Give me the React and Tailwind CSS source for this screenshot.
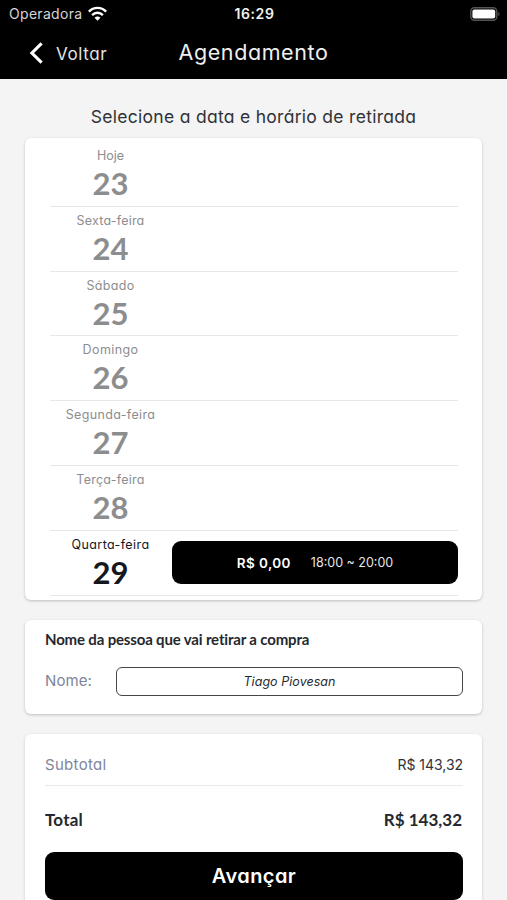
const days = [
  { name: "Hoje", number: 23, tracking: "tracking-[0px]" },
  { name: "Sexta-feira", number: 24, tracking: "tracking-[0.2px]" },
  { name: "Sábado", number: 25, tracking: "tracking-[0.35px]" },
  { name: "Domingo", number: 26, tracking: "tracking-[0.4px]" },
  { name: "Segunda-feira", number: 27, tracking: "tracking-[0.35px]" },
  { name: "Terça-feira", number: 28, tracking: "tracking-[0.25px]" },
  { name: "Quarta-feira", number: 29, tracking: "tracking-[0.4px]", slot: { price: "R$ 0,00", time: "18:00 ~ 20:00" } },
];

const StatusBar = () => (
  <div className="grid grid-cols-3 items-center h-7 pl-[9px] pr-[7px] font-['Inter',sans-serif] [font-feature-settings:normal]">
    <div className="flex items-center gap-[6px]">
      <span className="text-[14px] leading-5 tracking-[0.3px] text-[#d5d5d5]">Operadora</span>
      <svg width="19" height="15" viewBox="0 0 18 14" fill="none" stroke="white" strokeWidth="2.3" className="-mt-px">
        <path d="M0.8 5.2C5.4 0.5 12.6 0.5 17.2 5.2" />
        <path d="M3.9 8.5C6.8 5.6 11.2 5.6 14.1 8.5" />
        <path d="M9 13.8L6.2 11C7.8 9.5 10.2 9.5 11.8 11Z" fill="white" stroke="none" />
      </svg>
    </div>
    <span className="text-center text-[14px] leading-5 font-semibold tracking-[0.6px] text-[#f2f2f2]">16:29</span>
    <div className="flex justify-end">
      <svg width="30" height="14" viewBox="0 0 30 14">
        <rect x="0.8" y="0.8" width="26" height="12.4" rx="3.6" fill="none" stroke="#555" strokeWidth="1.4" />
        <rect x="2.4" y="2.4" width="22.8" height="9.2" rx="2" fill="white" />
        <path d="M28.3 4.8C30 5.5 30 8.5 28.3 9.2Z" fill="#555" />
      </svg>
    </div>
  </div>
);

const Header = () => (
  <header className="h-[79px] shrink-0 bg-black text-white">
    <StatusBar />
    <div className="grid grid-cols-[1fr_auto_1fr] items-center h-[50px]">
      <button className="flex items-center pl-[29px]">
        <svg width="15" height="22" viewBox="0 0 15 22" fill="none" stroke="white" strokeWidth="3.1">
          <path d="M12.6 1.4L2.9 11L12.6 20.6" />
        </svg>
        <span className="pl-[12px] pt-[2px] text-[17px] leading-6 tracking-[0.6px] text-[#e4e4e4]">Voltar</span>
      </button>
      <h1 className="pb-[2px] text-[21.5px] leading-7 tracking-[0.6px] text-[#efefef]">Agendamento</h1>
    </div>
  </header>
);

const DayRow = ({ day }) => (
  <li
    className={`flex h-[64.8px] border-b border-[#e7e7e7] ${day.slot ? "text-[#15171f]" : "text-[#8c8d8f]"}`}
  >
    <div className="w-[121px] pt-[4px] text-center">
      <p className={`text-[12.5px] leading-5 ${day.tracking}`}>{day.name}</p>
      <p className="-mt-px font-['Lato',sans-serif] text-[31px] leading-[36px] font-bold">{day.number}</p>
    </div>
    {day.slot && (
      <button className="flex flex-1 items-center justify-center gap-[20px] h-[43px] mt-[10.5px] ml-px rounded-[9px] bg-black text-white">
        <span className="text-[13.5px] font-semibold tracking-[0.4px]">{day.slot.price}</span>
        <span className="pt-px text-[12.5px] text-[#e6e6e6]">{day.slot.time}</span>
      </button>
    )}
  </li>
);

export default function App() {
  return (
    <div className="flex flex-col h-[900px] overflow-hidden bg-[#f4f4f4] font-['Inter',sans-serif] [font-feature-settings:'cv11']">
      <Header />
      <main className="flex flex-col px-[25px]">
        <h2 className="mt-[25px] mb-[9px] text-center text-[17.5px] leading-[25px] tracking-[0.29px] text-[#303238]">
          Selecione a data e horário de retirada
        </h2>

        {/* Available days */}
        <section className="h-[462px] pl-[25px] pr-[24px] pt-[4px] rounded-[6px] bg-white shadow-[0_1px_3px_rgba(0,0,0,0.22)]">
          <ul>
            {days.map((day) => (
              <DayRow key={day.number} day={day} />
            ))}
          </ul>
        </section>

        {/* Pickup person */}
        <section className="h-[94px] mt-[20px] pl-[20px] pr-[19px] pt-[9px] rounded-[6px] bg-white shadow-[0_1px_3px_rgba(0,0,0,0.22)]">
          <h3 className="font-['Lato',sans-serif] text-[15px] leading-5 font-bold tracking-[-0.16px] text-[#25282e]">
            Nome da pessoa que vai retirar a compra
          </h3>
          <label className="flex items-center mt-[18px]">
            <span className="w-[71px] pb-px text-[15px] leading-5 tracking-[0.1px] text-[#7d859c]">Nome:</span>
            <input
              className="flex-1 min-w-0 h-[29px] rounded-[6px] border border-[#44464b] bg-white text-center text-[12.5px] italic tracking-[0.05px] text-[#25282e]"
              defaultValue="Tiago Piovesan"
            />
          </label>
        </section>

        {/* Order summary */}
        <section className="h-[190px] mt-[20px] pl-[20px] pr-[19px] rounded-[6px] bg-white shadow-[0_1px_3px_rgba(0,0,0,0.18)]">
          <div className="flex items-center justify-between h-[52px] pt-[10px] border-b border-[#e7e9ee]">
            <span className="pt-[2px] text-[15px] tracking-[0.3px] text-[#7d859c]">Subtotal</span>
            <span className="text-[14px] tracking-[-0.05px] text-[#303238]">R$ 143,32</span>
          </div>
          <div className="flex items-center justify-between h-[66px] pt-[2px] font-['Lato',sans-serif] text-[17px] font-bold text-[#25282e]">
            <span className="tracking-[0.2px]">Total</span>
            <span className="pr-px">R$ 143,32</span>
          </div>
          <button className="w-full h-[48px] rounded-[9px] bg-black text-[20px] font-semibold tracking-[0.45px] text-white">
            Avançar
          </button>
        </section>
      </main>
    </div>
  );
}
